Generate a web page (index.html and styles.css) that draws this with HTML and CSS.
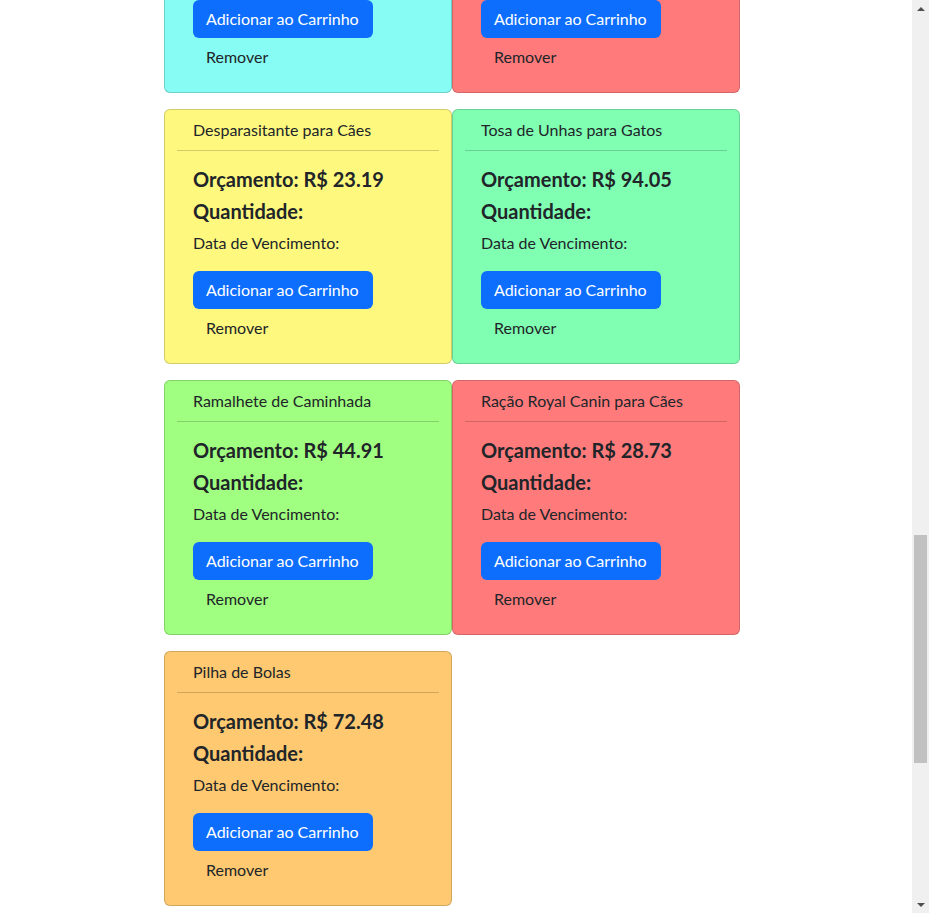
FILE: index.html
```html
<!DOCTYPE html>
<html lang="pt">
<head>
<meta charset="utf-8">
<title>Produtos</title>
<link rel="stylesheet" href="styles.css">
</head>
<body>
<div class="screen">
  <main class="main">
    <div class="grid">
      <div class="card cyan">
        <div class="card-header">Brinquedo para Gatos</div>
        <div class="card-body">
          <h5>Orçamento: R$ 15.30</h5>
          <h5>Quantidade:</h5>
          <p class="date">Data de Vencimento:</p>
          <button class="btn btn-primary">Adicionar ao Carrinho</button>
          <button class="btn btn-link">Remover</button>
        </div>
      </div>
      <div class="card red">
        <div class="card-header">Coleira Antipulgas</div>
        <div class="card-body">
          <h5>Orçamento: R$ 52.10</h5>
          <h5>Quantidade:</h5>
          <p class="date">Data de Vencimento:</p>
          <button class="btn btn-primary">Adicionar ao Carrinho</button>
          <button class="btn btn-link">Remover</button>
        </div>
      </div>
      <div class="card yellow">
        <div class="card-header">Desparasitante para Cães</div>
        <div class="card-body">
          <h5>Orçamento: R$ 23.19</h5>
          <h5>Quantidade:</h5>
          <p class="date">Data de Vencimento:</p>
          <button class="btn btn-primary">Adicionar ao Carrinho</button>
          <button class="btn btn-link">Remover</button>
        </div>
      </div>
      <div class="card mint">
        <div class="card-header">Tosa de Unhas para Gatos</div>
        <div class="card-body">
          <h5>Orçamento: R$ 94.05</h5>
          <h5>Quantidade:</h5>
          <p class="date">Data de Vencimento:</p>
          <button class="btn btn-primary">Adicionar ao Carrinho</button>
          <button class="btn btn-link">Remover</button>
        </div>
      </div>
      <div class="card lime">
        <div class="card-header">Ramalhete de Caminhada</div>
        <div class="card-body">
          <h5>Orçamento: R$ 44.91</h5>
          <h5>Quantidade:</h5>
          <p class="date">Data de Vencimento:</p>
          <button class="btn btn-primary">Adicionar ao Carrinho</button>
          <button class="btn btn-link">Remover</button>
        </div>
      </div>
      <div class="card red">
        <div class="card-header">Ração Royal Canin para Cães</div>
        <div class="card-body">
          <h5>Orçamento: R$ 28.73</h5>
          <h5>Quantidade:</h5>
          <p class="date">Data de Vencimento:</p>
          <button class="btn btn-primary">Adicionar ao Carrinho</button>
          <button class="btn btn-link">Remover</button>
        </div>
      </div>
      <div class="card orange">
        <div class="card-header">Pilha de Bolas</div>
        <div class="card-body">
          <h5>Orçamento: R$ 72.48</h5>
          <h5>Quantidade:</h5>
          <p class="date">Data de Vencimento:</p>
          <button class="btn btn-primary">Adicionar ao Carrinho</button>
          <button class="btn btn-link">Remover</button>
        </div>
      </div>
    </div>
  </main>
  <div class="scrollbar">
    <div class="arrow up"></div>
    <div class="track"><div class="thumb"></div></div>
    <div class="arrow down"></div>
  </div>
</div>
</body>
</html>
```
FILE: styles.css
```css
* { box-sizing: border-box; }
html, body {
  margin: 0;
  padding: 0;
  height: 913px;
  overflow: hidden;
  background: #fff;
}
body {
  font-family: Lato, "Noto Sans", sans-serif;
  font-size: 16px;
  line-height: 24px;
  color: #212529;
}
.screen {
  display: flex;
  height: 913px;
}
.main {
  flex: 1;
  overflow: hidden;
}
.grid {
  display: grid;
  grid-template-columns: 288px 288px;
  row-gap: 16px;
  margin-top: -162px;
  padding-left: 164px;
}
.card {
  border: 1px solid rgba(0, 0, 0, 0.175);
  border-radius: 6px;
  height: 255px;
}
.cyan { background: #87fcf4; }
.red { background: #ff7b7b; }
.yellow { background: #fef87e; }
.mint { background: #80ffb3; }
.lime { background: #a0ff80; }
.orange { background: #fec970; }
.card-header {
  margin: 0 12px;
  padding: 8px 16px;
  border-bottom: 1px solid rgba(0, 0, 0, 0.175);
}
.card-body {
  padding: 16px 28px;
}
h5 {
  margin: 0 0 8px;
  font-size: 20px;
  line-height: 24px;
  font-weight: 700;
}
.date {
  margin: 0 0 16px;
}
.btn {
  display: block;
  font-family: inherit;
  font-size: 16px;
  line-height: 24px;
  padding: 6px 12px;
  border: 1px solid transparent;
  border-radius: 6px;
  height: 38px;
  cursor: pointer;
}
.btn-primary {
  background: #0d6efd;
  color: #fff;
  width: 180px;
  text-align: left;
}
.btn-link {
  background: transparent;
  color: #212529;
}
.scrollbar {
  width: 17px;
  background: #f0f0f0;
  display: flex;
  flex-direction: column;
  align-items: center;
}
.arrow {
  height: 17px;
  width: 17px;
  display: flex;
  align-items: center;
  justify-content: center;
}
.arrow::before {
  content: "";
  width: 0;
  height: 0;
  border-left: 4px solid transparent;
  border-right: 4px solid transparent;
}
.up::before { border-bottom: 4px solid #505050; }
.down::before { border-top: 4px solid #505050; }
.track {
  flex: 1;
  width: 17px;
  padding: 518px 2px 0;
}
.thumb {
  height: 228px;
  background: #c1c1c1;
}
```
